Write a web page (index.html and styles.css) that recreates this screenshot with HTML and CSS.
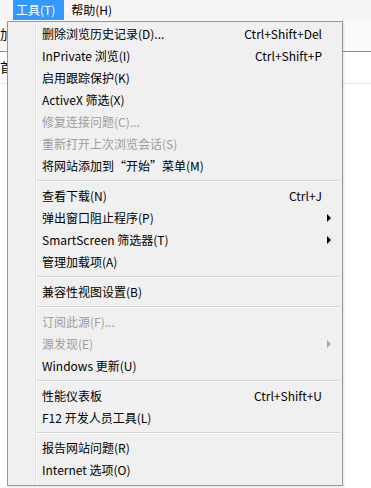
FILE: index.html
```html
<!DOCTYPE html>
<html lang="zh-CN">
<head>
<meta charset="utf-8">
<title>工具菜单</title>
<link rel="stylesheet" href="styles.css">
</head>
<body>
<div class="chrome">
  <div class="menubar">
    <span class="mb-item active">工具(T)</span>
    <span class="mb-item">帮助(H)</span>
  </div>
  <div class="addr"><span class="frag">加</span></div>
</div>
<div class="tabs"><span class="frag">首</span></div>

<div class="menu">
  <div class="row"><span class="label">删除浏览历史记录(D)...</span><span class="key">Ctrl+Shift+Del</span><span class="sub"></span></div>
  <div class="row"><span class="label">InPrivate 浏览(I)</span><span class="key">Ctrl+Shift+P</span><span class="sub"></span></div>
  <div class="row"><span class="label">启用跟踪保护(K)</span><span class="key"></span><span class="sub"></span></div>
  <div class="row"><span class="label">ActiveX 筛选(X)</span><span class="key"></span><span class="sub"></span></div>
  <div class="row disabled"><span class="label">修复连接问题(C)...</span><span class="key"></span><span class="sub"></span></div>
  <div class="row disabled"><span class="label">重新打开上次浏览会话(S)</span><span class="key"></span><span class="sub"></span></div>
  <div class="row"><span class="label">将网站添加到“开始”菜单(M)</span><span class="key"></span><span class="sub"></span></div>
  <div class="sep"></div>
  <div class="row"><span class="label">查看下载(N)</span><span class="key">Ctrl+J</span><span class="sub"></span></div>
  <div class="row"><span class="label">弹出窗口阻止程序(P)</span><span class="key"></span><span class="sub"><i class="arrow"></i></span></div>
  <div class="row"><span class="label">SmartScreen 筛选器(T)</span><span class="key"></span><span class="sub"><i class="arrow"></i></span></div>
  <div class="row"><span class="label">管理加载项(A)</span><span class="key"></span><span class="sub"></span></div>
  <div class="sep"></div>
  <div class="row"><span class="label">兼容性视图设置(B)</span><span class="key"></span><span class="sub"></span></div>
  <div class="sep"></div>
  <div class="row disabled"><span class="label">订阅此源(F)...</span><span class="key"></span><span class="sub"></span></div>
  <div class="row disabled"><span class="label">源发现(E)</span><span class="key"></span><span class="sub"><i class="arrow"></i></span></div>
  <div class="row"><span class="label">Windows 更新(U)</span><span class="key"></span><span class="sub"></span></div>
  <div class="sep"></div>
  <div class="row"><span class="label">性能仪表板</span><span class="key">Ctrl+Shift+U</span><span class="sub"></span></div>
  <div class="row"><span class="label">F12 开发人员工具(L)</span><span class="key"></span><span class="sub"></span></div>
  <div class="sep"></div>
  <div class="row"><span class="label">报告网站问题(R)</span><span class="key"></span><span class="sub"></span></div>
  <div class="row"><span class="label">Internet 选项(O)</span><span class="key"></span><span class="sub"></span></div>
</div>
</body>
</html>
```

FILE: styles.css
```css
* { box-sizing: border-box; }

html, body {
  margin: 0;
  padding: 0;
  background: #ffffff;
  font-family: "Noto Sans CJK SC", "Noto Sans", sans-serif;
  font-size: 12px;
  color: #000;
  overflow: hidden;
}

.chrome {
  background: #f5f5f5;
  height: 52px;
  border-bottom: 1px solid #8e8e8e;
}

.menubar {
  display: flex;
  height: 20px;
  padding-left: 13px;
}

.mb-item {
  height: 20px;
  line-height: 20px;
  padding: 0 8px 0 3px;
  margin-right: 4px;
}

.mb-item.active {
  background: #3399ff;
  color: #ffffff;
  padding: 0 9px 0 3px;
}

.addr {
  height: 31px;
  line-height: 28px;
  background: #fafafa;
}

.tabs {
  height: 32px;
  line-height: 30px;
  border-bottom: 1px solid #e3e3e3;
}

.frag {
  display: inline-block;
  font-size: 13px;
}

.menu {
  position: absolute;
  left: 7px;
  top: 21px;
  width: 336px;
  height: 465px;
  border: 1px solid #979797;
  background-color: #f0f0f0;
  background-image: linear-gradient(to right,
    transparent 27px, #e2e3e3 27px, #e2e3e3 28px,
    #ffffff 28px, #ffffff 29px, transparent 29px);
  padding: 1px 0 3px 0;
  box-shadow: 1px 1px 2px rgba(0, 0, 0, 0.12);
}

.row {
  display: grid;
  grid-template-columns: 1fr auto 20px;
  align-items: center;
  height: 22px;
  line-height: 22px;
  padding-left: 34px;
  white-space: nowrap;
}

.row.disabled {
  color: #9d9d9d;
}

.key {
  text-align: right;
}

.sub {
  display: flex;
  align-items: center;
  height: 22px;
  padding-left: 5px;
}

.arrow {
  display: block;
  width: 0;
  height: 0;
  border-left: 4px solid #000;
  border-top: 4px solid transparent;
  border-bottom: 4px solid transparent;
}

.row.disabled .arrow {
  border-left-color: #a8a8a8;
}

.sep {
  height: 8px;
  margin: 0 2px 0 29px;
  background: linear-gradient(to bottom,
    transparent 3px, #d7d7d7 3px, #d7d7d7 4px,
    #ffffff 4px, #ffffff 5px, transparent 5px);
}
```
